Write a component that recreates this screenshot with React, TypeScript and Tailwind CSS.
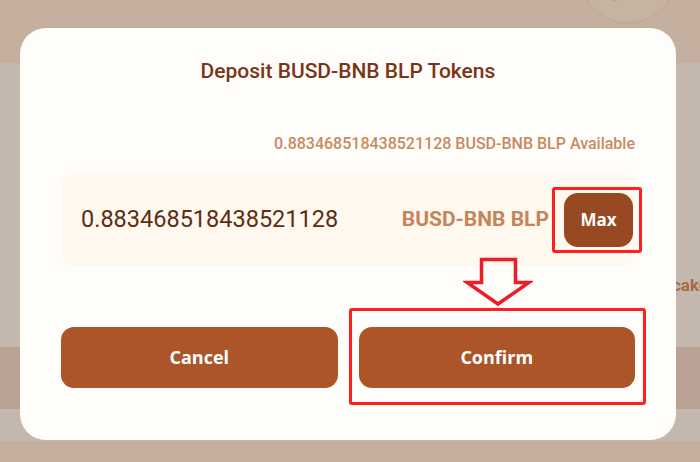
export default function App() {
  return (
    <div className="relative h-[462px] w-[700px] overflow-hidden bg-[#c5b09f] font-['Roboto',sans-serif]">
      {/* page behind the overlay */}
      <div className="flex h-full flex-col pt-[63px]">
        <div className="flex h-[284px] bg-[#c3b7ae]">
          <div className="ml-auto flex w-[28px] items-end pb-[49px]">
            <span className="text-[17px] font-bold text-[#a86a45]">cake</span>
          </div>
        </div>
        <div className="h-[62px] bg-[#b9a194]" />
        <div className="h-[32px] bg-[#c3b7ae]" />
      </div>
      <div className="absolute right-[22px] top-[-76px] h-[100px] w-[100px] rounded-full border-[2px] border-[#c1ab98] bg-[#c7b3a1]">
        <div className="absolute bottom-[20px] left-[30px] h-[8px] w-[8px] rounded-full bg-[#bfa793]" />
        <div className="absolute bottom-[28px] left-[52px] h-[6px] w-[6px] rounded-full bg-[#bfa793]" />
      </div>

      {/* modal */}
      <div className="absolute left-[20px] top-[28px] flex h-[412px] w-[656px] flex-col rounded-[26px] bg-[#fffdf9] px-[41px] pt-[29px]">
        <h2 className="text-center text-[21px] font-medium leading-[28px] text-[#7a3516]">Deposit BUSD-BNB BLP Tokens</h2>
        <p className="mt-[49px] text-right text-[16px] font-medium leading-[20px] text-[#c88a62]">
          0.883468518438521128 BUSD-BNB BLP Available
        </p>
        <div className="mt-[19px] flex h-[93px] items-center rounded-[14px] bg-[#fff8ef] pl-[20px] pr-[2px]">
          <span className="text-[23.5px] text-[#5b2e14]">0.883468518438521128</span>
          <span className="ml-auto text-[21px] font-bold text-[#c5855b]">BUSD-BNB BLP</span>
          <button className="ml-[15px] flex h-[54px] w-[69px] items-center justify-center rounded-[14px] bg-[#974a22] font-['Open_Sans',sans-serif] text-[17px] font-bold text-white">
            Max
          </button>
        </div>
        <div className="mt-[61px] flex gap-[21px]">
          <button className="flex h-[61px] flex-1 items-center justify-center rounded-[13px] bg-[#ab5529] font-['Open_Sans',sans-serif] text-[18px] font-bold text-white">
            Cancel
          </button>
          <button className="flex h-[61px] flex-1 items-center justify-center rounded-[13px] bg-[#ab5529] font-['Open_Sans',sans-serif] text-[18px] font-bold text-white">
            Confirm
          </button>
        </div>
      </div>

      {/* annotations */}
      <div className="absolute left-[552px] top-[187px] h-[66px] w-[90px] rounded-[3px] border-[3px] border-[#ff1f1f]" />
      <div className="absolute left-[349px] top-[308px] h-[97px] w-[297px] rounded-[3px] border-[3px] border-[#ff1f1f]" />
      <svg className="absolute left-[463px] top-[257px]" width="70" height="50" viewBox="0 0 70 50">
        <path d="M18.5 2.5 H52.5 V25.5 H66 L35 47 L4 25.5 H18.5 Z" fill="none" stroke="#ee1c24" strokeWidth="3.5" strokeLinejoin="miter" />
      </svg>
    </div>
  );
}
